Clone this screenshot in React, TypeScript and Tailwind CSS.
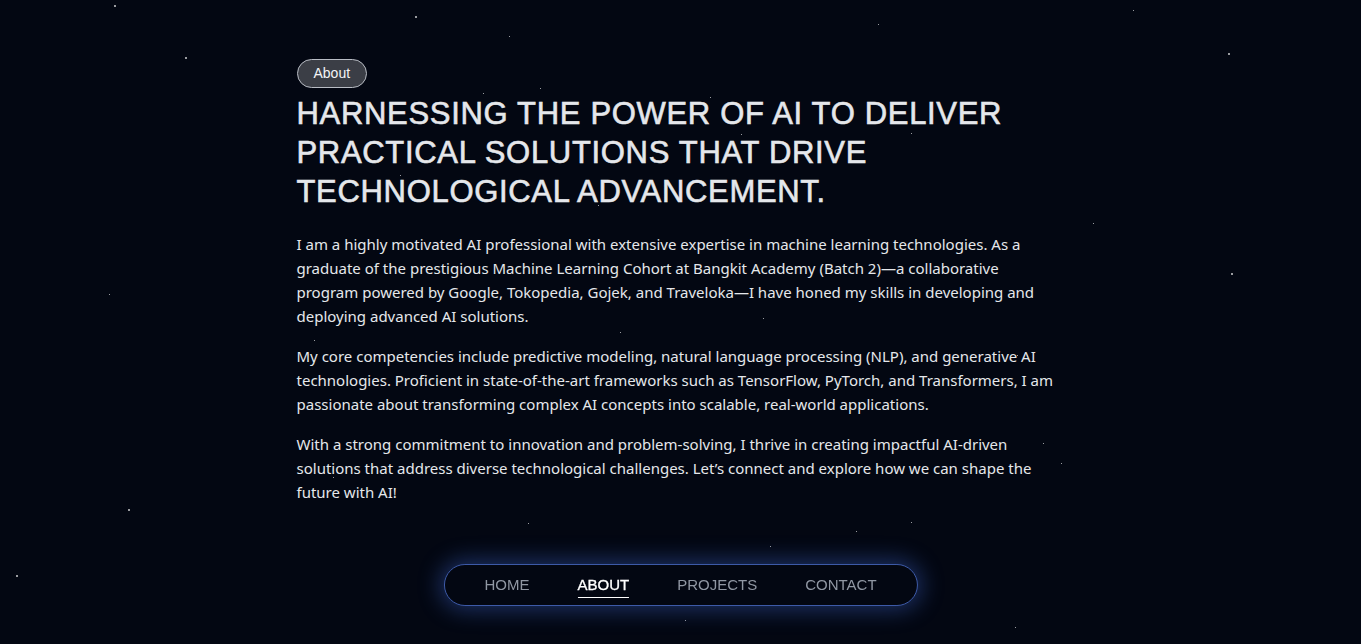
import React from "react";

const stars: [number, number, number][] = [
    [114, 5, 2], [185, 57, 2], [415, 16, 2], [509, 36, 1], [878, 24, 1], [1228, 53, 2],
    [540, 88, 1], [483, 93, 1], [710, 97, 1], [911, 133, 1], [741, 134, 1], [400, 175, 1],
    [598, 205, 1], [1093, 223, 1], [1231, 273, 2], [109, 294, 1], [763, 318, 1], [620, 332, 1],
    [314, 340, 1], [1017, 355, 1], [1043, 443, 1], [1061, 463, 1], [333, 477, 1], [128, 509, 2],
    [528, 523, 1], [856, 531, 1], [911, 522, 1], [16, 575, 2], [1015, 627, 1], [685, 620, 1],
    [1133, 10, 1], [860, 595, 1], [770, 546, 1],
];

const navItems = ["HOME", "ABOUT", "PROJECTS", "CONTACT"];

export default function App() {
    return (
        <div className="relative min-h-screen w-full overflow-hidden bg-[#030712] text-gray-200">
            {/* star field */}
            {stars.map(([x, y, s], i) => (
                <span
                    key={i}
                    className="absolute rounded-full bg-white/80"
                    style={{ left: x, top: y, width: s, height: s }}
                />
            ))}

            <section className="relative mx-auto max-w-3xl pt-[59px] pb-32">
                <span className="inline-flex h-[29px] items-center rounded-full border border-[#b8bcc4] bg-[#3b3e46] px-[16px] text-[14px] text-gray-100 font-['Liberation_Sans',sans-serif]">
                    About
                </span>

                <h1 className="mt-[6px] text-[31px] font-normal leading-[39px] tracking-[0.022em] text-gray-200 [-webkit-text-stroke:0.6px_#e5e7eb] font-['Liberation_Sans',sans-serif]">
                    HARNESSING THE POWER OF AI TO DELIVER
                    <br />
                    PRACTICAL SOLUTIONS THAT DRIVE
                    <br />
                    TECHNOLOGICAL ADVANCEMENT.
                </h1>

                <div className="mt-[21px] space-y-4 pr-2 text-[15px] leading-6 text-gray-200 font-['Noto_Sans',sans-serif]">
                    <p>
                        I am a highly motivated AI professional with extensive expertise in machine learning technologies. As a graduate of the prestigious Machine Learning Cohort at Bangkit Academy (Batch 2)—a collaborative program powered by Google, Tokopedia, Gojek, and Traveloka—I have honed my skills in developing and deploying advanced AI solutions.
                    </p>
                    <p>
                        My core competencies include predictive modeling, natural language processing (NLP), and generative AI technologies. Proficient in state-of-the-art frameworks such as TensorFlow, PyTorch, and Transformers, I am passionate about transforming complex AI concepts into scalable, real-world applications.
                    </p>
                    <p>
                        With a strong commitment to innovation and problem-solving, I thrive in creating impactful AI-driven solutions that address diverse technological challenges. Let’s connect and explore how we can shape the future with AI!
                    </p>
                </div>
            </section>

            {/* floating nav */}
            <nav className="fixed bottom-[38px] left-1/2 -translate-x-1/2 flex h-[42px] items-center gap-12 rounded-full border border-[#3d5aa8] bg-[#030712] px-10 shadow-[0_0_22px_4px_rgba(59,100,200,0.45)] font-['Liberation_Sans',sans-serif]">
                {navItems.map((item) => (
                    <a
                        key={item}
                        href="#"
                        className={
                            item === "ABOUT"
                                ? "border-b-[1.5px] border-white pt-[1.5px] text-[15px] text-white [-webkit-text-stroke:0.3px_#fff]"
                                : "text-[15px] text-[#9097a3]"
                        }
                    >
                        {item}
                    </a>
                ))}
            </nav>
        </div>
    );
}
